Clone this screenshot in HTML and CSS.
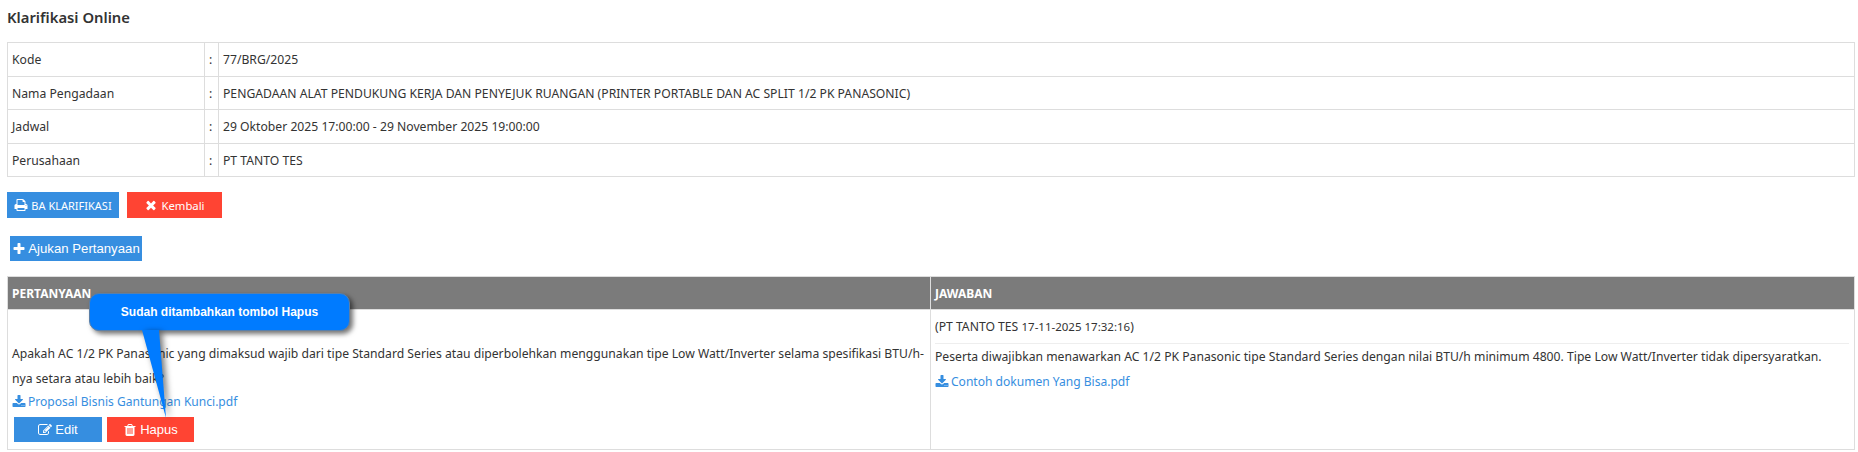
FILE: index.html

```html
<!DOCTYPE html>
<html lang="id">
<head>
  <meta charset="UTF-8">
  <title>Klarifikasi Online</title>
  <link rel="stylesheet" href="styles.css">
</head>
<body>

<div class="page">
  <h4 class="title">Klarifikasi Online</h4>

  <table class="info">
    <tr>
      <td class="info-label">Kode</td>
      <td class="info-sep">:</td>
      <td>77/BRG/2025</td>
    </tr>
    <tr>
      <td class="info-label">Nama Pengadaan</td>
      <td class="info-sep">:</td>
      <td>PENGADAAN ALAT PENDUKUNG KERJA DAN PENYEJUK RUANGAN (PRINTER PORTABLE DAN AC SPLIT 1/2 PK PANASONIC)</td>
    </tr>
    <tr>
      <td class="info-label">Jadwal</td>
      <td class="info-sep">:</td>
      <td>29 Oktober 2025 17:00:00 - 29 November 2025 19:00:00</td>
    </tr>
    <tr>
      <td class="info-label">Perusahaan</td>
      <td class="info-sep">:</td>
      <td>PT TANTO TES</td>
    </tr>
  </table>

  <div class="actions">
    <a href="#" class="btn btn-blue btn-ba">
      <svg class="icon" viewBox="0 0 1792 1792"><path d="M448 1536h896v-256h-896v256zm0-640h896v-384h-160q-40 0-68-28t-28-68v-160h-640v640zm1152 64q0-26-19-45t-45-19-45 19-19 45 19 45 45 19 45-19 19-45zm128 0v416q0 13-9.500 22.500t-22.500 9.500h-224v160q0 40-28 68t-68 28h-960q-40 0-68-28t-28-68v-160h-224q-13 0-22.500-9.500t-9.500-22.500v-416q0-79 56.500-135.500t135.500-56.500h64v-544q0-40 28-68t68-28h672q40 0 88 20t76 48l152 152q28 28 48 76t20 88v256h64q79 0 135.500 56.500t56.500 135.500z"/></svg>
      BA KLARIFIKASI
    </a>
    <a href="#" class="btn btn-red btn-kembali">
      <svg class="icon" viewBox="0 0 1792 1792"><path d="M1490 1322q0 40-28 68l-136 136q-28 28-68 28t-68-28l-294-294-294 294q-28 28-68 28t-68-28l-136-136q-28-28-28-68t28-68l294-294-294-294q-28-28-28-68t28-68l136-136q28-28 68-28t68 28l294 294 294-294q28-28 68-28t68 28l136 136q28 28 28 68t-28 68l-294 294 294 294q28 28 28 68z"/></svg>
      Kembali
    </a>
  </div>

  <div class="ask">
    <a href="#" class="btn btn-blue btn-arial btn-ajukan">
      <svg class="icon" viewBox="0 0 1792 1792"><path d="M1600 736v192q0 40-28 68t-68 28h-416v416q0 40-28 68t-68 28h-192q-40 0-68-28t-28-68v-416h-416q-40 0-68-28t-28-68v-192q0-40 28-68t68-28h416v-416q0-40 28-68t68-28h192q40 0 68 28t28 68v416h416q40 0 68 28t28 68z"/></svg>
      Ajukan Pertanyaan
    </a>
  </div>

  <table class="qa">
    <tr>
      <th class="qa-left">PERTANYAAN</th>
      <th>JAWABAN</th>
    </tr>
    <tr>
      <td class="qa-q">
        <p class="q-text">Apakah AC 1/2 PK Panasonic yang dimaksud wajib dari tipe Standard Series atau diperbolehkan menggunakan tipe Low Watt/Inverter selama spesifikasi BTU/h-nya setara atau lebih baik?</p>
        <a href="#" class="file">
          <svg class="icon" viewBox="0 0 1792 1792"><path d="M1344 1344q0-26-19-45t-45-19-45 19-19 45 19 45 45 19 45-19 19-45zm256 0q0-26-19-45t-45-19-45 19-19 45 19 45 45 19 45-19 19-45zm128-224v320q0 40-28 68t-68 28h-1472q-40 0-68-28t-28-68v-320q0-40 28-68t68-28h465l135 136q58 56 136 56t136-56l136-136h464q40 0 68 28t28 68zm-325-569q17 41-14 70l-448 448q-18 19-45 19t-45-19l-448-448q-31-29-14-70 17-39 59-39h256v-448q0-26 19-45t45-19h256q26 0 45 19t19 45v448h256q42 0 59 39z"/></svg>
          Proposal Bisnis Gantungan Kunci.pdf
        </a>
        <div class="q-buttons">
          <a href="#" class="btn btn-blue btn-arial btn-edit">
            <svg class="icon" viewBox="0 0 1792 1792"><path d="M888 1184l116-116-152-152-116 116v56h96v96h56zm440-720q-16-16-33 1l-350 350q-17 17-1 33t33-1l350-350q17-17 1-33zm80 594v190q0 119-84.500 203.500t-203.500 84.500h-832q-119 0-203.500-84.500t-84.500-203.500v-832q0-119 84.500-203.500t203.500-84.500h832q63 0 117 25 15 7 18 23 3 17-9 29l-49 49q-14 14-32 8-23-6-45-6h-832q-66 0-113 47t-47 113v832q0 66 47 113t113 47h832q66 0 113-47t47-113v-126q0-13 9-22l64-64q15-15 35-7t20 29zm-96-738l288 288-672 672h-288v-288zm444 132l-92 92-288-288 92-92q28-28 68-28t68 28l152 152q28 28 28 68t-28 68z"/></svg>
            Edit
          </a>
          <a href="#" class="btn btn-red btn-arial btn-hapus">
            <svg class="icon" viewBox="0 0 1792 1792"><path d="M704 1376v-704q0-14-9-23t-23-9h-64q-14 0-23 9t-9 23v704q0 14 9 23t23 9h64q14 0 23-9t9-23zm256 0v-704q0-14-9-23t-23-9h-64q-14 0-23 9t-9 23v704q0 14 9 23t23 9h64q14 0 23-9t9-23zm256 0v-704q0-14-9-23t-23-9h-64q-14 0-23 9t-9 23v704q0 14 9 23t23 9h64q14 0 23-9t9-23zm-544-992h448l-48-117q-7-9-17-11h-317q-10 2-17 11zm928 32v64q0 14-9 23t-23 9h-96v948q0 83-47 143.500t-113 60.500h-832q-66 0-113-58.500t-47-141.500v-952h-96q-14 0-23-9t-9-23v-64q0-14 9-23t23-9h309l70-167q15-37 54-63t79-26h320q40 0 79 26t54 63l70 167h309q14 0 23 9t9 23z"/></svg>
            Hapus
          </a>
        </div>
      </td>
      <td class="qa-a">
        <div class="a-head">(PT TANTO TES <span class="a-date">17-11-2025 17:32:16</span>)</div>
        <p class="a-text">Peserta diwajibkan menawarkan AC 1/2 PK Panasonic tipe Standard Series dengan nilai BTU/h minimum 4800. Tipe Low Watt/Inverter tidak dipersyaratkan.</p>
        <a href="#" class="file">
          <svg class="icon" viewBox="0 0 1792 1792"><path d="M1344 1344q0-26-19-45t-45-19-45 19-19 45 19 45 45 19 45-19 19-45zm256 0q0-26-19-45t-45-19-45 19-19 45 19 45 45 19 45-19 19-45zm128-224v320q0 40-28 68t-68 28h-1472q-40 0-68-28t-28-68v-320q0-40 28-68t68-28h465l135 136q58 56 136 56t136-56l136-136h464q40 0 68 28t28 68zm-325-569q17 41-14 70l-448 448q-18 19-45 19t-45-19l-448-448q-31-29-14-70 17-39 59-39h256v-448q0-26 19-45t45-19h256q26 0 45 19t19 45v448h256q42 0 59 39z"/></svg>
          Contoh dokumen Yang Bisa.pdf
        </a>
      </td>
    </tr>
  </table>

  <!-- callout di atas tabel -->
  <div class="callout">Sudah ditambahkan tombol Hapus</div>
  <svg class="callout-tail" width="40" height="90" viewBox="0 0 40 90"><polygon points="2,0 19,0 26,88"/></svg>
</div>

</body>
</html>
```

FILE: styles.css

```css
* {
  margin: 0;
  padding: 0;
  box-sizing: border-box;
}
body {
  background-color: #fff;
  color: #333;
  font-family: "Noto Sans", "Open Sans", sans-serif;
  font-size: 12.18px;
}
a {
  text-decoration: none;
}
.page {
  position: relative;
  height: 452px;
  padding: 0 3px 0 7px;
}
.title {
  height: 42px;
  padding-top: 7px;
  font-size: 14.8px;
  line-height: 20px;
  font-weight: 600;
}

/* tabel info */
.info,
.qa {
  width: 100%;
  border-collapse: collapse;
  table-layout: fixed;
}
.info td {
  height: 33.5px;
  padding: 1px 4px 0;
  border: 1px solid #ddd;
}
.info-label {
  width: 197px;
}
.info-sep {
  width: 14px;
}
.actions {
  display: flex;
  gap: 8px;
  margin-top: 15px;
}
.ask {
  margin-top: 18px;
  padding-left: 3px;
}

/* tombol */
.btn {
  display: flex;
  align-items: center;
  justify-content: center;
  gap: 3px;
  color: #fff;
  white-space: nowrap;
}
.btn-blue {
  background-color: #368ee0;
}
.btn-red {
  background-color: #ff4433;
}
.btn-arial {
  font-family: "Liberation Sans", sans-serif;
  font-size: 13px;
}
.btn-ba {
  width: 112px;
  height: 26px;
  font-size: 11px;
}
.btn-kembali {
  width: 95px;
  height: 26px;
  font-size: 11.3px;
}
.btn-ajukan {
  width: 132px;
  height: 25px;
  gap: 2px;
  font-size: 13.2px;
}
.icon {
  width: 14px;
  height: 14px;
  fill: currentColor;
  flex-shrink: 0;
}

/* tabel pertanyaan */
.qa {
  margin-top: 15px;
}
.qa th {
  height: 33px;
  padding: 0 4px;
  background-color: #7b7b7b;
  border: 1px solid #ddd;
  color: #fff;
  text-align: left;
  font-size: 12px;
  font-weight: 700;
}
.qa-left {
  width: 923px;
}
.qa td {
  height: 140px;
  vertical-align: top;
  border: 1px solid #ddd;
}
.qa-q {
  padding: 31px 4px 0;
}
.q-text {
  line-height: 25px;
}
.file {
  display: flex;
  align-items: center;
  gap: 2px;
  height: 24px;
  padding-bottom: 3px;
  font-size: 12.05px;
  color: #368ee0;
}
.q-buttons {
  display: flex;
  gap: 5px;
  margin-top: 2px;
  padding-left: 2px;
}
.btn-edit {
  width: 88px;
  height: 25px;
}
.btn-hapus {
  width: 87px;
  height: 25px;
}
.qa-a {
  padding: 6px 4px 0;
}
.qa-a .file {
  margin-top: 2px;
}
.a-head {
  height: 28px;
  line-height: 22px;
  margin-right: 1px;
  border-bottom: 1px solid #eee;
}
.a-date {
  font-size: 11.5px;
}
.a-text {
  line-height: 25px;
}

/* callout */
.callout {
  position: absolute;
  left: 89px;
  top: 293px;
  width: 261px;
  height: 38px;
  background-color: #007bff;
  border: 1px solid #5a7fa8;
  border-radius: 10px;
  box-shadow: 3px 3px 5px rgba(0, 0, 0, 0.55);
  color: #fff;
  font-family: "Liberation Sans", sans-serif;
  font-size: 12px;
  font-weight: 700;
  line-height: 36px;
  text-align: center;
}
.callout-tail {
  position: absolute;
  left: 140px;
  top: 330px;
  fill: #007bff;
  filter: drop-shadow(3px 2px 3px rgba(0, 0, 0, 0.55));
}
```
